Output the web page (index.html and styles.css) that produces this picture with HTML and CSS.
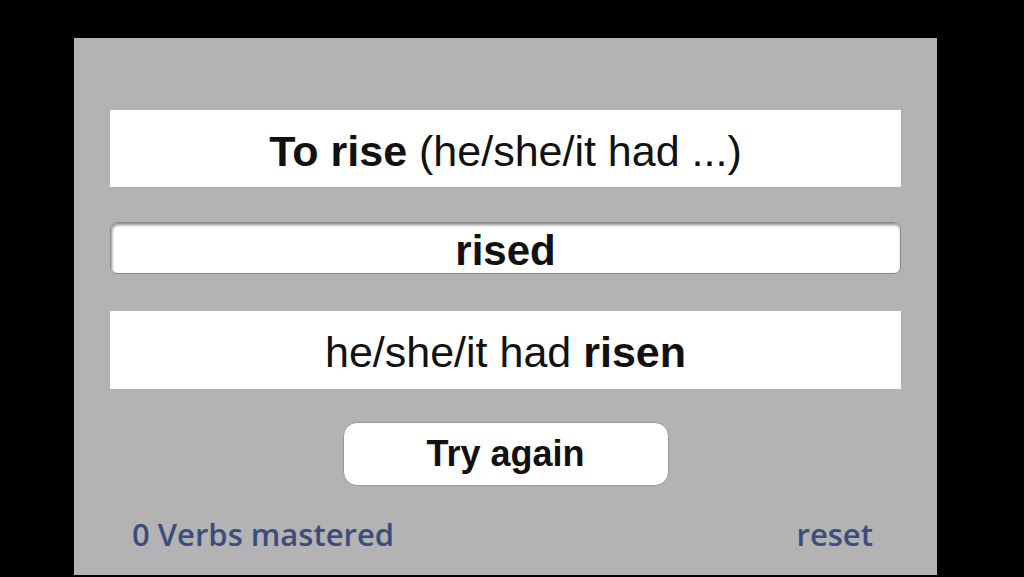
FILE: index.html
```html
<!DOCTYPE html>
<html lang="en">
<head>
    <meta charset="UTF-8">
    <meta name="viewport" content="width=device-width, initial-scale=1.0">
    <title>Irregular Verbs</title>
    <link rel="stylesheet" href="styles.css">
</head>
<body>

    <div class="panel">
        <div class="box question"><b>To rise</b>&nbsp;(he/she/it had ...)</div>

        <input type="text" class="answer" value="rised">

        <div class="box solution">he/she/it had&nbsp;<b>risen</b></div>

        <button class="try-btn">Try again</button>

        <div class="footer">
            <span class="count">0 Verbs mastered</span>
            <a href="#" class="reset">reset</a>
        </div>
    </div>

</body>
</html>
```

FILE: styles.css
```css
body {
    margin: 0;
    background: #000;
    font-family: "Liberation Sans", Arial, sans-serif;
}
.panel {
    margin: 38px 0 0 74px;
    width: 863px;
    height: 537px;
    background: #b3b3b3;
    box-sizing: border-box;
    padding: 72px 36px 0 36px;
    display: flex;
    flex-direction: column;
    align-items: center;
}
.box {
    width: 100%;
    box-sizing: border-box;
    background: #fff;
    display: flex;
    justify-content: center;
    align-items: center;
    padding-top: 5px;
    font-size: 43px;
    color: #111;
}
.question {
    height: 77px;
}
.answer {
    margin-top: 35px;
    width: 100%;
    height: 52px;
    box-sizing: border-box;
    border: 1px solid #8a8a8a;
    border-radius: 7px;
    box-shadow: inset 1px 2px 3px rgba(0, 0, 0, 0.45);
    background: #fff;
    text-align: center;
    font-family: "Liberation Sans", Arial, sans-serif;
    font-size: 42px;
    font-weight: bold;
    color: #111;
    padding: 5px 0 0 0;
}
.solution {
    margin-top: 37px;
    height: 78px;
}
.try-btn {
    margin-top: 33px;
    width: 326px;
    height: 64px;
    background: #fff;
    border: 1px solid #999;
    border-radius: 14px;
    font-family: "Liberation Sans", Arial, sans-serif;
    font-size: 36px;
    font-weight: bold;
    color: #111;
    cursor: pointer;
}
.footer {
    width: 100%;
    box-sizing: border-box;
    padding: 0 28px 0 22px;
    margin-top: 27px;
    display: flex;
    justify-content: space-between;
    font-family: "Open Sans", sans-serif;
    font-weight: 600;
    font-size: 31px;
    color: #3c4c7c;
}
.reset {
    color: #3c4c7c;
    text-decoration: none;
}
```
